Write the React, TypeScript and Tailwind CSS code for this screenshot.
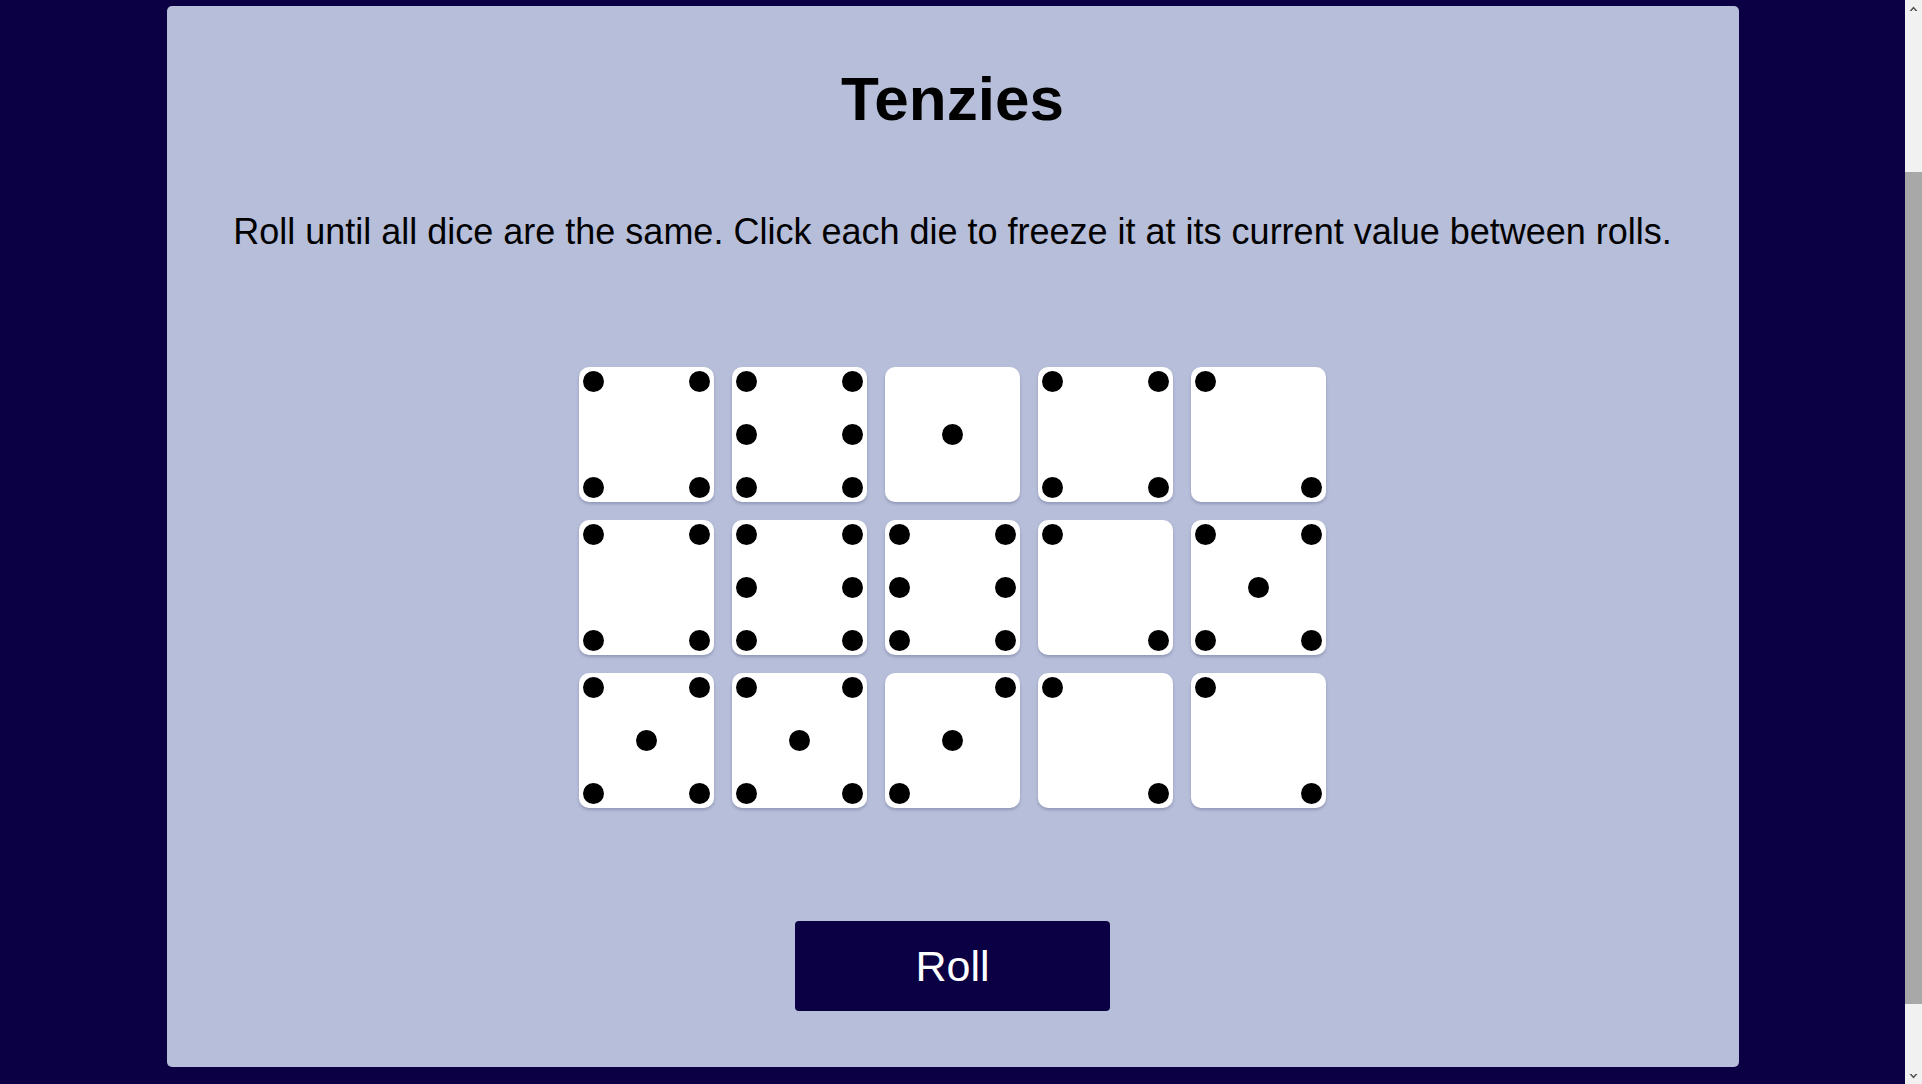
type Spot = 'tl' | 'tr' | 'ml' | 'mr' | 'bl' | 'br' | 'c';

const FACES: Record<number, Spot[]> = {
  1: ['c'],
  2: ['tl', 'br'],
  3: ['tr', 'c', 'bl'],
  4: ['tl', 'tr', 'bl', 'br'],
  5: ['tl', 'tr', 'c', 'bl', 'br'],
  6: ['tl', 'tr', 'ml', 'mr', 'bl', 'br'],
};

const SPOT_CLASS: Record<Spot, string> = {
  tl: 'col-start-1 row-start-1',
  tr: 'col-start-3 row-start-1',
  ml: 'col-start-1 row-start-2 self-center',
  mr: 'col-start-3 row-start-2 self-center',
  bl: 'col-start-1 row-start-3',
  br: 'col-start-3 row-start-3',
  c: 'col-start-2 row-start-2 self-center justify-self-center',
};

const DICE = [4, 6, 1, 4, 2, 4, 6, 6, 2, 5, 5, 5, 3, 2, 2];

function Die({ value }: { value: number }) {
  return (
    <button className="grid h-[135px] w-[135px] grid-cols-[21px_1fr_21px] grid-rows-[21px_1fr_21px] rounded-[10px] bg-white p-[4px] shadow-[0_2px_3px_rgba(40,45,90,0.25)]">
      {FACES[value].map((s) => (
        <span key={s} className={`h-[21px] w-[21px] rounded-full bg-black ${SPOT_CLASS[s]}`} />
      ))}
    </button>
  );
}

// the page in the shot is scrolled a bit, so the browser scrollbar shows on the right
function Scrollbar() {
  return (
    <div className="flex h-full w-[17px] shrink-0 flex-col bg-[#f1f1f1]">
      <div className="flex h-[17px] items-center justify-center">
        <svg width="9" height="6" viewBox="0 0 9 6">
          <path d="M4.5 0.5 L8.5 5 L6.5 5 L4.5 2.8 L2.5 5 L0.5 5 Z" fill="#505050" />
        </svg>
      </div>
      <div className="mt-[155px] h-[832px] bg-[#a8a8a8]" />
      <div className="flex-1" />
      <div className="flex h-[17px] items-center justify-center">
        <svg width="9" height="6" viewBox="0 0 9 6">
          <path d="M4.5 5.5 L8.5 1 L6.5 1 L4.5 3.2 L2.5 1 L0.5 1 Z" fill="#505050" />
        </svg>
      </div>
    </div>
  );
}

export default function App() {
  return (
    <div className="flex h-screen overflow-hidden bg-[#0a0043] font-['Liberation_Sans',Arial,sans-serif]">
      <div className="flex-1 pt-[6px]">
        <main className="mx-auto flex h-[1061px] w-[1572px] flex-col items-center rounded-[5px] bg-[#b7bed9] pt-[62px] text-black">
          <h1 className="text-[62px] leading-none font-bold">Tenzies</h1>
          <p className="mt-[84px] text-[36px] leading-none">
            Roll until all dice are the same. Click each die to freeze it at its current value between rolls.
          </p>
          <div className="mt-[117px] grid grid-cols-5 gap-[18px]">
            {DICE.map((v, i) => (
              <Die key={i} value={v} />
            ))}
          </div>
          <button className="mt-[113px] h-[90px] w-[315px] rounded-[4px] bg-[#0a0043] text-[43px] text-white">
            Roll
          </button>
        </main>
      </div>
      <Scrollbar />
    </div>
  );
}
